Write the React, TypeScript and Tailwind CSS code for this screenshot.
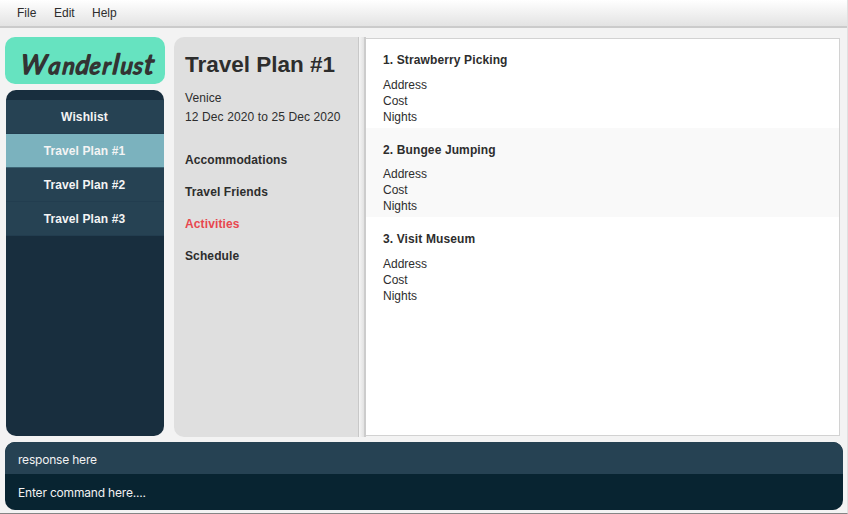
const plans = ['Wishlist', 'Travel Plan #1', 'Travel Plan #2', 'Travel Plan #3'];
const sections = ['Accommodations', 'Travel Friends', 'Activities', 'Schedule'];
const activities = ['1. Strawberry Picking', '2. Bungee Jumping', '3. Visit Museum'];

function MenuBar() {
  return (
    <header className="flex h-[28px] shrink-0 gap-[19px] border-b-2 border-[#cbcbcb] bg-linear-to-b from-white to-[#e3e3e3] pl-[17px] text-[12px] leading-[27px] text-[#2d2d2d]">
      <span className="w-[18px]">File</span>
      <span className="w-[19px]">Edit</span>
      <span>Help</span>
    </header>
  );
}

function Sidebar() {
  return (
    <aside className="flex w-[160px] shrink-0 flex-col">
      <div className="flex h-[47px] items-center justify-center rounded-[10px] bg-[#66e3c0]">
        <svg width="160" height="47" className="block overflow-visible">
          <text
            transform="translate(0 36.5) skewX(-6)"
            x="15 43 57 70 84 97 107 115 128 138.5"
            y="0"
            fontSize="23"
            fill="#333"
            stroke="#333"
            strokeWidth="1.5"
            strokeLinejoin="round"
            className="font-['Lato',sans-serif] italic"
          >
            <tspan fontSize="27">W</tspan>an<tspan fontSize="26">d</tspan>er<tspan fontSize="28">l</tspan>us<tspan fontSize="28">t</tspan>
          </text>
        </svg>
      </div>
      <nav className="mx-px mt-[6px] h-[346px] overflow-hidden rounded-[10px] bg-[#182e3e] pt-[10px]">
        {plans.map((plan, i) => (
          <div
            key={plan}
            className={`flex h-[34px] items-center justify-center border-b pr-px text-[12px] font-bold tracking-[0.12px] text-[#f4f4f4] ${
              i === 1 ? 'border-[#3c6474] bg-[#7bb2be]' : 'border-[#223d4f] bg-[#264253]'
            }`}
          >
            {plan}
          </div>
        ))}
      </nav>
    </aside>
  );
}

function PlanDetails() {
  return (
    <section className="w-[184px] shrink-0 rounded-l-[10px] bg-[#dfdfdf] pl-[11px] whitespace-nowrap text-[#2d2d2d]">
      <h1 className="pt-[14px] text-[22.5px] leading-[28px] font-bold">Travel Plan #1</h1>
      <p className="mt-[10px] text-[12px] leading-[19px] tracking-[0.1px]">Venice</p>
      <p className="text-[12px] leading-[19px] tracking-[0.11px]">12 Dec 2020 to 25 Dec 2020</p>
      <ul className="mt-[17px] text-[12px] leading-[32px] font-bold tracking-[0.12px]">
        {sections.map((s) => (
          <li key={s} className={s === 'Activities' ? 'text-[#e8474f]' : ''}>
            {s}
          </li>
        ))}
      </ul>
    </section>
  );
}

function ActivityList() {
  return (
    <section className="my-px flex-1 border-t border-r border-b border-[#d2d2d2] bg-white">
      {activities.map((a, i) => (
        <article
          key={a}
          className={`pl-[17px] text-[12px] leading-[16px] text-[#2d2d2d] ${
            i === 1 ? 'h-[89px] bg-[#f9f9f9] pt-[14px]' : i === 0 ? 'h-[89px] pt-[13px]' : 'h-[90px] pt-[14px]'
          }`}
        >
          <h2 className={`font-bold tracking-[0.12px] ${i === 1 ? 'mb-[8px]' : 'mb-[9px]'}`}>{a}</h2>
          <p>Address</p>
          <p>Cost</p>
          <p>Nights</p>
        </article>
      ))}
    </section>
  );
}

export default function App() {
  return (
    <div className="flex h-[514px] w-[848px] flex-col overflow-hidden border-r border-b border-r-[#e0e0e0] border-b-[#858585] bg-[#f3f3f3] font-['Liberation_Sans',Arial,sans-serif]">
      <MenuBar />
      <main className="mt-[9px] flex h-[400px] shrink-0 gap-[9px] pr-[7px] pl-[5px]">
        <Sidebar />
        <div className="flex flex-1">
          <PlanDetails />
          <div className="w-[8px] shrink-0 border-r-2 border-l border-r-[#cccccc] border-l-[#c8c8c8] bg-linear-to-r from-[#f5f5f5] to-[#e2e2e2]" />
          <ActivityList />
        </div>
      </main>
      <footer className="mt-[5px] mr-[4px] ml-[5px] h-[68px] shrink-0 overflow-hidden rounded-[10px] bg-[#082431] font-['Inter',sans-serif] text-[12px] text-[#f2f2f2]">
        <div className="h-[32px] bg-[#264253] pl-[13px] leading-[36px] tracking-[-0.2px]">response here</div>
        <div className="pl-[13px] leading-[37px] tracking-[-0.18px]">Enter command here....</div>
      </footer>
    </div>
  );
}
